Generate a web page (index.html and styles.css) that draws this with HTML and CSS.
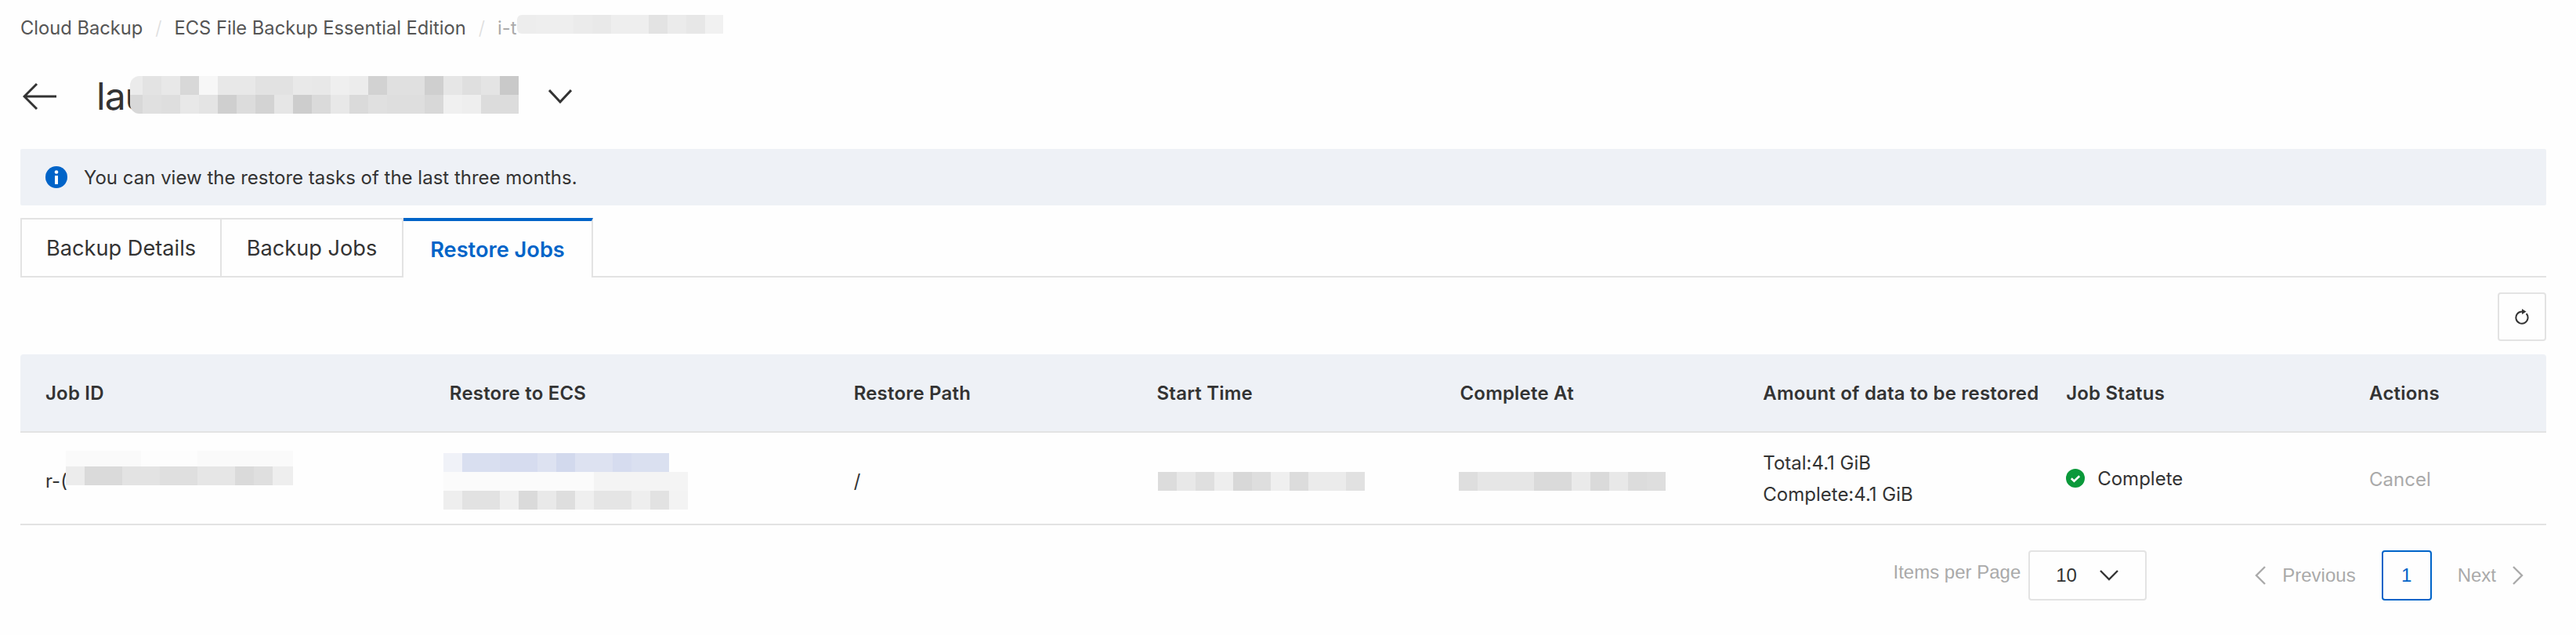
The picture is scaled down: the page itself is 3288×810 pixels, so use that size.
FILE: index.html
```html
<!DOCTYPE html>
<html lang="en">
<head>
<meta charset="utf-8">
<title>Restore Jobs</title>
<link rel="stylesheet" href="styles.css">
</head>
<body>
<main class="page">
  <nav class="crumbs">
    <span>Cloud Backup</span><span class="sep">/</span>
    <span>ECS File Backup Essential Edition</span><span class="sep">/</span>
    <span class="crumb-last">i-t<i class="mosaic m-crumb"></i></span>
  </nav>
  <header class="title-row">
    <svg class="back" width="44" height="36" viewBox="0 0 44 36"><path d="M43 18H2M18 2 2 18l16 16" fill="none" stroke="#333" stroke-width="3"/></svg>
    <h1 class="title">lau<i class="mosaic m-title"></i></h1>
    <svg class="title-chev" width="30" height="18" viewBox="0 0 30 18"><path d="M1 1l14 15L29 1" fill="none" stroke="#333" stroke-width="3"/></svg>
  </header>
  <div class="alert">
    <svg width="28" height="28" viewBox="0 0 28 28"><circle cx="14" cy="14" r="14" fill="#0064c8"/><circle cx="14" cy="7.5" r="2.3" fill="#fff"/><rect x="12" y="12" width="4" height="11" fill="#fff"/></svg>
    <span>You can view the restore tasks of the last three months.</span>
  </div>
  <div class="tabs">
    <div class="tab tab-a">Backup Details</div>
    <div class="tab tab-b">Backup Jobs</div>
    <div class="tab tab-c active">Restore Jobs</div>
  </div>
  <div class="toolbar">
    <button class="refresh"><svg width="20" height="20" viewBox="0 0 20 20"><path d="M10 3.5A7.6 7.6 0 1 0 15.6 6" fill="none" stroke="#333" stroke-width="2"/><path d="M10 0l5.5 3.5L10 7z" fill="#333"/></svg></button>
  </div>
  <section class="table">
    <div class="row head">
      <div>Job ID</div><div>Restore to ECS</div><div>Restore Path</div><div>Start Time</div><div>Complete At</div><div>Amount of data to be restored</div><div>Job Status</div><div>Actions</div>
    </div>
    <div class="row body">
      <div class="cell low">r-(<i class="mosaic m-job"></i></div>
      <div class="cell"><i class="mosaic m-ecs"></i></div>
      <div class="low">/</div>
      <div class="cell"><i class="mosaic m-start"></i></div>
      <div class="cell"><i class="mosaic m-end"></i></div>
      <div class="amount"><div>Total:4.1 GiB</div><div>Complete:4.1 GiB</div></div>
      <div class="status"><svg width="24" height="24" viewBox="0 0 24 24"><circle cx="12" cy="12" r="12" fill="#0a993a"/><path d="M6.8 12.3l3.6 3.5 6.8-6.6" fill="none" stroke="#fff" stroke-width="2.6"/></svg><span>Complete</span></div>
      <div class="muted cancel">Cancel</div>
    </div>
  </section>
  <footer class="pager">
    <span class="muted per">Items per Page</span>
    <div class="select"><span>10</span><svg width="24" height="14" viewBox="0 0 24 14"><path d="M1 1l11 11L23 1" fill="none" stroke="#333" stroke-width="2.4"/></svg></div>
    <svg class="p-chev" width="14" height="24" viewBox="0 0 14 24"><path d="M13 1 2 12l11 11" fill="none" stroke="#aaa" stroke-width="2.4"/></svg>
    <span class="muted prev">Previous</span>
    <div class="page-box">1</div>
    <span class="muted next">Next</span>
    <svg class="n-chev" width="14" height="24" viewBox="0 0 14 24"><path d="M1 1l11 11L1 23" fill="none" stroke="#aaa" stroke-width="2.4"/></svg>
  </footer>
</main>
</body>
</html>
```
FILE: styles.css
```css
* { box-sizing: border-box; }
html, body { margin: 0; background: #fefefe; }
body { font-family: Inter, "Liberation Sans", sans-serif; font-size: 24px; color: #333; }
.page { padding: 0 38px 0 26px; width: 3288px; }
.mosaic { position: absolute; display: block; background-repeat: no-repeat; }

.crumbs { height: 70px; display: flex; align-items: center; font-size: 23.7px; color: #555; }
.sep { color: #ddd; margin: 0 16px; font-weight: 300; }
.crumb-last { position: relative; color: #aaa; }
.m-crumb { left: 25px; top: -2px; width: 263px; height: 24px; border-radius: 6px 0 0 6px;
  background-image: linear-gradient(90deg,#ededed 24px,#eee 0 72px,#ebebeb 0 96px,#e9e9e9 0 120px,#eee 0 168px,#e3e3e3 0 192px,#ebebeb 0 216px,#e7e7e7 0 240px,#f1f1f1 0); }

.title-row { height: 106px; display: flex; align-items: center; }
.back { margin-left: 3px; }
.title { position: relative; margin: 0 0 0 50px; width: 577px; font-size: 48px; font-weight: 400; line-height: 60px; letter-spacing: -1px; color: #333; }
.m-title { left: 43px; top: 4px; width: 496px; height: 48px; border-radius: 12px 0 0 12px;
  background-size: 100% 24px;
  background-position: top, bottom;
  background-image:
    linear-gradient(90deg,#ebebeb 16px,#e3e3e3 0 40px,#e8e8e8 0 64px,#d8d8d8 0 88px,#f7f7f7 0 112px,#e8e8e8 0 160px,#e2e2e2 0 208px,#e9e9e9 0 232px,#e8e8e8 0 256px,#efefef 0 280px,#ececec 0 304px,#d2d2d2 0 328px,#e0e0e0 0 376px,#cfcfcf 0 400px,#e6e6e6 0 424px,#dfdfdf 0 448px,#e4e4e4 0 472px,#c9c9c9 0),
    linear-gradient(90deg,#d8d8d8 16px,#e0e0e0 0 40px,#dedede 0 64px,#e8e8e8 0 88px,#e4e4e4 0 112px,#cfcfcf 0 136px,#dcdcdc 0 160px,#d3d3d3 0 184px,#e6e6e6 0 208px,#cdcdcd 0 232px,#dadada 0 256px,#e8e8e8 0 280px,#dadada 0 304px,#e0e0e0 0 328px,#dedede 0 376px,#d8d8d8 0 400px,#f0f0f0 0 424px,#eee 0 448px,#dcdcdc 0); }

.alert { margin-top: 14px; height: 72px; padding-left: 32px; display: flex; align-items: center; gap: 21px; background: #eef1f6; border-radius: 2px; }

.tabs { margin-top: 16px; height: 76px; display: flex; border-bottom: 2px solid #e3e3e3; }
.tab { height: 76px; display: flex; align-items: center; justify-content: center; font-size: 27.2px; border: 2px solid #e3e3e3; border-left: 0; border-bottom: 0; background: #fefefe; }
.tab-a { width: 257px; border-left: 2px solid #e3e3e3; border-bottom: 2px solid #e3e3e3; }
.tab-b { width: 232px; border-bottom: 2px solid #e3e3e3; }
.tab-c { width: 242px; }
.active { color: #0064c8; font-weight: 600; border-top: 4px solid #0064c8; }

.toolbar { margin-top: 19px; display: flex; justify-content: flex-end; }
.refresh { width: 62px; height: 62px; padding: 0; display: flex; align-items: center; justify-content: center; background: #fefefe; border: 2px solid #e3e3e3; border-radius: 4px; }

.table { margin-top: 17px; }
.row { display: grid; grid-template-columns: 4fr 4fr 3fr 3fr 3fr 3fr 3fr 2fr; align-items: center; border-bottom: 2px solid #e3e3e3; }
.row > div { padding-left: 32px; }
.head { height: 100px; background: #eef1f6; font-weight: 600; letter-spacing: 0.2px; border-radius: 4px 4px 0 0; }
.body { height: 118px; }
.cell { position: relative; }
.row > .low { padding-top: 6px; }
.row > .cancel { padding-top: 2px; }
.m-job { left: 58px; top: -18px; width: 290px; height: 44px; background-size: 100% 24px, 100% 20px; background-position: bottom, top;
  background-image:
    linear-gradient(90deg,#ececec 24px,#dadada 0 72px,#e3e3e3 0 120px,#dfdfdf 0 168px,#e6e6e6 0 216px,#dadada 0 240px,#dfdfdf 0 264px,#eee 0),
    linear-gradient(90deg,#fafafa 96px,#fdfdfd 0 168px,#fafafa 0); }
.m-ecs { left: 24px; top: -32px; width: 312px; height: 72px; background-size: 100% 24px; background-position: top, center, bottom;
  background-image:
    linear-gradient(90deg,#f0f2f8 24px,#d9dff0 0 72px,#d6dcef 0 120px,#dde2f1 0 144px,#d2d9ed 0 168px,#dde2f1 0 216px,#d6dcef 0 240px,#dae0f0 0 288px,#fefefe 0),
    linear-gradient(90deg,#fbfbfb 192px,#f4f4f4 0 312px),
    linear-gradient(90deg,#eee 24px,#e2e2e2 0 72px,#efefef 0 96px,#dadada 0 120px,#e9e9e9 0 144px,#dedede 0 168px,#efefef 0 192px,#e5e5e5 0 240px,#eee 0 264px,#e2e2e2 0 288px,#f3f3f3 0); }
.m-start { left: 33px; top: -8px; width: 264px; height: 24px;
  background-image: linear-gradient(90deg,#dcdcdc 24px,#e8e8e8 0 48px,#dfdfdf 0 72px,#eee 0 96px,#d8d8d8 0 120px,#dedede 0 144px,#efefef 0 168px,#dcdcdc 0 192px,#ebebeb 0 240px,#e1e1e1 0); }
.m-end { left: 31px; top: -8px; width: 264px; height: 24px;
  background-image: linear-gradient(90deg,#dedede 24px,#e6e6e6 0 96px,#dadada 0 144px,#eaeaea 0 168px,#dadada 0 192px,#e8e8e8 0 216px,#dcdcdc 0 240px,#dedede 0); }
.amount { line-height: 40px; padding-top: 2px; }
.status { display: flex; align-items: center; gap: 16px; }
.muted { color: #aaa; }

.pager { margin-top: 32px; height: 64px; display: flex; align-items: center; justify-content: flex-end; font-family: "Liberation Sans", sans-serif; }
.per { margin: -8px 10px 0 0; }
.select { width: 151px; height: 64px; padding: 0 34px 0 33px; display: flex; align-items: center; justify-content: space-between; border: 2px solid #e3e3e3; border-radius: 4px; }
.p-chev { margin-left: 138px; }
.prev { margin-left: 21px; }
.page-box { width: 64px; height: 64px; margin-left: 33px; display: flex; align-items: center; justify-content: center; color: #0064c8; border: 2px solid #0064c8; border-radius: 4px; }
.next { margin-left: 33px; }
.n-chev { margin: 0 29px 0 21px; }
```
